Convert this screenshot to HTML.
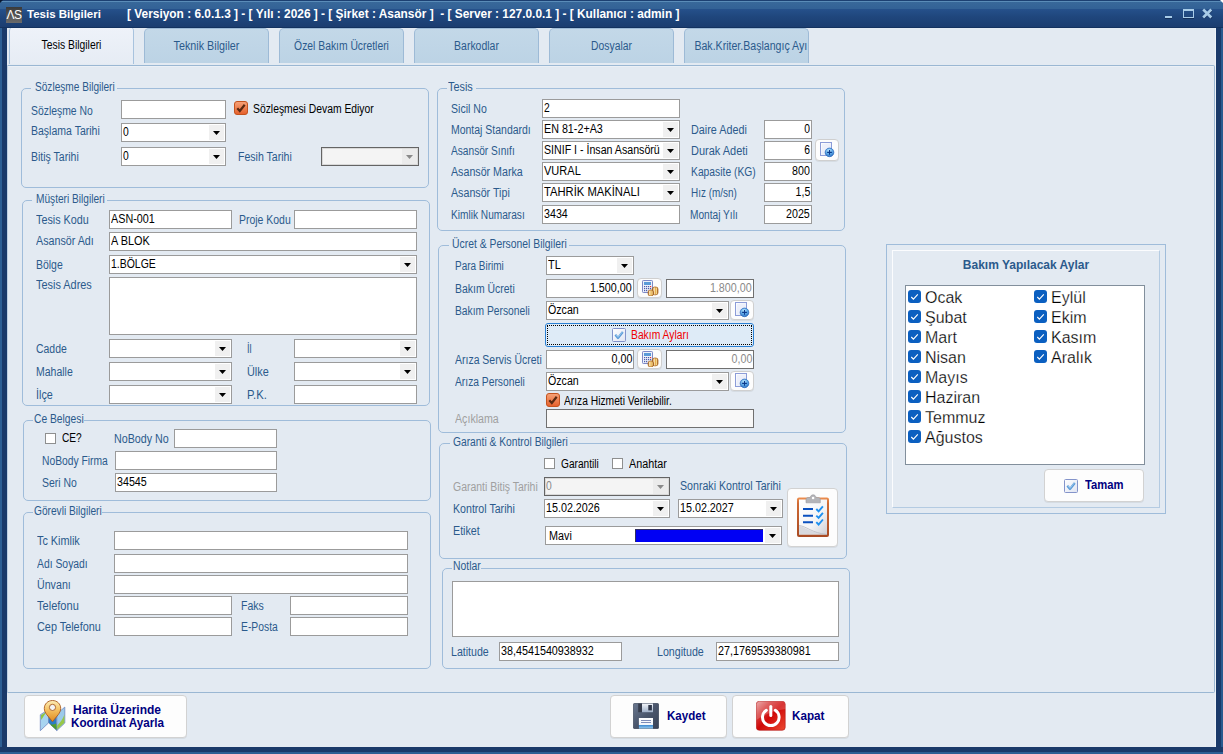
<!DOCTYPE html>
<html lang="tr"><head><meta charset="utf-8"><title>Tesis Bilgileri</title>
<style>
html,body{margin:0;padding:0}
body{width:1223px;height:754px;overflow:hidden;position:relative;background:#1c3f70;font-family:"Liberation Sans",sans-serif;font-size:12.5px;color:#000}
.abs{position:absolute}
#win{position:absolute;left:0;top:0;width:1223px;height:754px;overflow:hidden}
#tb{position:absolute;left:0;top:0;width:1223px;height:28px;background:linear-gradient(#1c4072 0,#1c4072 1px,#5a8cb8 1px,#5a8cb8 2px,#38689a 2px,#336296 8.500px,#25508a 9.500px,#1f467c 17px,#1b3d70 27px,#13325f 27px,#13325f 28px)}
#client{position:absolute;left:7px;top:28px;width:1209px;height:719px;background:#e3eaf2}
.t{position:absolute;white-space:pre;line-height:15px;height:15px;margin-left:-.5px;transform:scaleX(.82);transform-origin:0 50%}
.tr{transform-origin:100% 50%}
.bold{font-weight:bold}
.in{position:absolute;box-sizing:border-box;border:1px solid #9b9b9b;background:#fff;overflow:hidden}
.in .v{position:absolute;left:1px;top:0;line-height:17px;white-space:pre;transform:scaleX(.82);transform-origin:0 50%}
.in .v.r{left:auto;right:1px;transform-origin:100% 50%}
.in.dis{background:#f4f4f4;border-color:#646464;box-shadow:inset 0 0 0 1px #d9d9d9}
.in.dis .v{color:#8a8a8a}
.in.et .v{left:3px;top:1px}
.in.dis2{border-color:#707070}
.in.dis2 .v{color:#8a8a8a}
.in.dis3{border-color:#707070;background:#f8f8f8}
.dd{position:absolute;right:1px;top:1px;bottom:1px;width:15px;background:#f0f0f0}
.dd b{position:absolute;left:4px;top:6px;width:7px;height:4px;background:#000;clip-path:polygon(0 0,100% 0,50% 100%)}
.in.dis .dd{background:#ebebeb}
.in.dis .dd b{background:#8a8a8a}
.grp{position:absolute;box-sizing:border-box;border:1px solid #9fbcda;border-radius:5px}
.lgbg{position:absolute;background:#e3eaf2}
.ck{position:absolute;width:11px;height:11px;box-sizing:border-box;border:1px solid #8e8f8f;background:#fff}
.btn{position:absolute;box-sizing:border-box;border:1px solid #d2d2d2;border-radius:4px;background:#fdfdfd;box-shadow:0 1px 0 rgba(0,0,0,.06)}
.btn.sm{border-color:#cfcfcf;border-radius:4px}
.nv{color:#000080;font-size:12.5px;line-height:15px;white-space:pre;transform-origin:0 50%}
.tab{position:absolute;top:28px;height:35px;box-sizing:border-box;border:1px solid #9dbad6;border-bottom:none;border-radius:5px 5px 0 0;background:linear-gradient(#c3d8e8,#bcd3e5)}
.tab.act{background:linear-gradient(#eef2f9,#e6ecf4);top:26px;height:38px;border-color:#a8c3de;clip-path:inset(2px 0 0 0)}
</style></head><body><div id="win">
<svg width="0" height="0" style="position:absolute"><defs>
<linearGradient id="gPg" x1="0" y1="0" x2="1" y2="1"><stop offset="0" stop-color="#ffffff"/><stop offset="1" stop-color="#dfe6f6"/></linearGradient>
<radialGradient id="gPl" cx=".45" cy=".3" r=".75"><stop offset="0" stop-color="#c4ecff"/><stop offset=".55" stop-color="#5aa6e6"/><stop offset="1" stop-color="#2a66b8"/></radialGradient>
<linearGradient id="gCoin" x1="0" y1="0" x2="1" y2="0"><stop offset="0" stop-color="#b0641a"/><stop offset=".3" stop-color="#fff0c8"/><stop offset=".55" stop-color="#e8b050"/><stop offset=".75" stop-color="#f6d890"/><stop offset="1" stop-color="#9c5210"/></linearGradient>
<linearGradient id="gCk" x1="0" y1="0" x2="1" y2="1"><stop offset="0" stop-color="#ffffff"/><stop offset="1" stop-color="#dfe4f2"/></linearGradient>
<linearGradient id="gOr" x1="0" y1="0" x2="0" y2="1"><stop offset="0" stop-color="#f7a47a"/><stop offset="1" stop-color="#e55f2a"/></linearGradient>
<linearGradient id="gBoard" x1="0" y1="0" x2="0" y2="1"><stop offset="0" stop-color="#ee9050"/><stop offset=".15" stop-color="#cf6a34"/><stop offset="1" stop-color="#a84a22"/></linearGradient>
<linearGradient id="gPaper" x1="0" y1="0" x2="1" y2="1"><stop offset="0" stop-color="#ffffff"/><stop offset=".6" stop-color="#f4f4f6"/><stop offset="1" stop-color="#cfd0d6"/></linearGradient>
<linearGradient id="gPin" x1="0" y1="0" x2="0" y2="1"><stop offset="0" stop-color="#fdeeb8"/><stop offset=".45" stop-color="#f4c060"/><stop offset="1" stop-color="#e08a20"/></linearGradient>
<linearGradient id="gFl" x1="0" y1="0" x2="1" y2="1"><stop offset="0" stop-color="#6a7890"/><stop offset=".5" stop-color="#4a566c"/><stop offset="1" stop-color="#384256"/></linearGradient>
<linearGradient id="gMetal" x1="0" y1="0" x2="0" y2="1"><stop offset="0" stop-color="#f2f5fa"/><stop offset="1" stop-color="#9fb0c8"/></linearGradient>
<linearGradient id="gLbl" x1="0" y1="0" x2="0" y2="1"><stop offset="0" stop-color="#ffffff"/><stop offset=".66" stop-color="#f2f5fa"/><stop offset=".68" stop-color="#3f8bd0"/><stop offset="1" stop-color="#9ccdf0"/></linearGradient>
<linearGradient id="gRed" x1="0" y1="0" x2="1" y2="1"><stop offset="0" stop-color="#e89a9a"/><stop offset=".25" stop-color="#d84040"/><stop offset=".5" stop-color="#d00808"/><stop offset="1" stop-color="#ec4a30"/></linearGradient>
</defs></svg>
<div id="tb"></div>

<div class="abs" style="left:0;top:28px;width:7px;height:726px;background:linear-gradient(90deg,#2d5f94 0,#2d5f94 2px,#1a3a6a 2px,#1a3a6a 100%)"></div>
<div class="abs" style="left:1216px;top:28px;width:7px;height:726px;background:linear-gradient(90deg,#1a3a6a 0,#1a3a6a 5px,#2a5a8e 5px,#2a5a8e 100%)"></div>
<div class="abs" style="left:0;top:747px;width:1223px;height:7px;background:linear-gradient(#1a3a6a 0,#1a3a6a 5px,#2d5f94 5px,#2d5f94 100%)"></div>
<div id="client"></div>
<div class="abs" style="left:6px;top:7px;width:16px;height:16px;background:linear-gradient(#3a3a3a,#6b6b6b);overflow:hidden"><span style="position:absolute;left:0;top:1px;width:16px;text-align:center;color:#fff;font-size:12px;line-height:14px;letter-spacing:-.5px">ΛS</span></div>
<span class="abs bold" style="left:27px;top:7px;color:#fff;font-size:11.5px;line-height:14px;white-space:pre">Tesis Bilgileri</span>
<span class="abs bold" style="left:127px;top:7px;color:#fff;font-size:11.9px;line-height:14px;white-space:pre">[ Versiyon : 6.0.1.3 ] - [ Yılı : 2026 ] - [ Şirket : Asansör ]  - [ Server : 127.0.0.1 ] - [ Kullanıcı : admin ]</span>
<div class="abs" style="left:1165px;top:16px;width:7px;height:2px;background:#a8cce8;box-shadow:0 1px 0 #14305a"></div>
<div class="abs" style="left:1183px;top:9px;width:11px;height:9px;box-sizing:border-box;border:1px solid #a8cce8;border-top-width:2px;box-shadow:0 1px 0 #14305a"></div>
<svg class="abs" style="left:1202px;top:8px" width="11" height="11" viewBox="0 0 11 11"><path d="M1.200 1.500L9.300 9.500M9.300 1.500L1.200 9.500" stroke="#14305a" stroke-width="2.200" transform="translate(.5,.8)"/><path d="M1.200 1.500L9.300 9.500M9.300 1.500L1.200 9.500" stroke="#a8cce8" stroke-width="2.600"/></svg>
<div class="abs" style="left:1220px;top:0;width:3px;height:3px;background:linear-gradient(225deg,#fff 0,#fff 45%,transparent 55%)"></div>
<div class="abs" style="left:0;top:0;width:3px;height:3px;background:linear-gradient(135deg,#0a1830 0,#0a1830 45%,transparent 55%)"></div>
<div class="tab act" style="left:9px;width:125px"><span style="position:absolute;left:0;right:0;top:11px;text-align:center;line-height:15px;white-space:pre;transform:scaleX(0.827);color:#000">Tesis Bilgileri</span></div>
<div class="tab " style="left:144px;width:125px"><span style="position:absolute;left:0;right:0;top:10px;text-align:center;line-height:15px;white-space:pre;transform:scaleX(0.8607);color:#2b5a8c">Teknik Bilgiler</span></div>
<div class="tab " style="left:279px;width:125px"><span style="position:absolute;left:0;right:0;top:10px;text-align:center;line-height:15px;white-space:pre;transform:scaleX(0.8267);color:#2b5a8c">Özel Bakım Ücretleri</span></div>
<div class="tab " style="left:414px;width:125px"><span style="position:absolute;left:0;right:0;top:10px;text-align:center;line-height:15px;white-space:pre;transform:scaleX(0.8365);color:#2b5a8c">Barkodlar</span></div>
<div class="tab " style="left:549px;width:125px"><span style="position:absolute;left:0;right:0;top:10px;text-align:center;line-height:15px;white-space:pre;transform:scaleX(0.8261);color:#2b5a8c">Dosyalar</span></div>
<div class="tab " style="left:684px;width:125px"><span style="position:absolute;left:0;right:0;top:10px;text-align:center;line-height:15px;white-space:pre;transform:scaleX(0.8467);color:#2b5a8c">Bak.Kriter.Başlangıç Ayı</span></div>
<div class="abs" style="left:1215px;top:28px;width:1px;height:719px;background:#eef3f8"></div>
<div class="abs" style="left:7px;top:65px;width:1208px;height:628px;box-sizing:border-box;border:1px solid #9ab7d3;border-left-color:#bdd0e3;border-radius:0 2px 2px 0;background:#e3eaf2;box-shadow:inset 0 1px 0 #ebf0f6"></div>
<div class="grp" style="left:21px;top:88px;width:408px;height:100px"></div>
<div class="lgbg" style="left:31px;top:86px;width:86px;height:5px"></div>
<span class="t " style="left:35px;top:80px;transform:scaleX(0.8082);color:#2b5a8c;">Sözleşme Bilgileri</span>
<span class="t " style="left:31px;top:104px;transform:scaleX(0.8307);color:#2b5a8c;">Sözleşme No</span>
<div class="in " style="left:121px;top:100px;width:105px;height:19px"></div>
<svg class="abs" style="left:234px;top:101px" width="14" height="14" viewBox="0 0 14 14"><rect x=".5" y=".5" width="13" height="13" rx="2.500" fill="url(#gOr)" stroke="#c4531f"/><path d="M3.300 7.300 L5.800 10 L10.700 3.800" fill="none" stroke="#5a2a12" stroke-width="2.200"/></svg>
<span class="t " style="left:253px;top:102px;transform:scaleX(0.8277);color:#000;">Sözleşmesi Devam Ediyor</span>
<span class="t " style="left:31px;top:124px;transform:scaleX(0.8411);color:#2b5a8c;">Başlama Tarihi</span>
<div class="in cb " style="left:121px;top:123px;width:105px;height:19px"><span class="v" style="transform:scaleX(0.8262)">0</span><i class="dd"><b></b></i></div>
<span class="t " style="left:31px;top:150px;transform:scaleX(0.8418);color:#2b5a8c;">Bitiş Tarihi</span>
<div class="in cb " style="left:121px;top:147px;width:105px;height:19px"><span class="v" style="transform:scaleX(0.8262)">0</span><i class="dd"><b></b></i></div>
<span class="t " style="left:238px;top:150px;transform:scaleX(0.8442);color:#2b5a8c;">Fesih Tarihi</span>
<div class="in cb dis" style="left:321px;top:147px;width:98px;height:19px"><i class="dd"><b></b></i></div>
<div class="grp" style="left:22px;top:200px;width:408px;height:206px"></div>
<div class="lgbg" style="left:32px;top:198px;width:75px;height:5px"></div>
<span class="t " style="left:36px;top:192px;transform:scaleX(0.811);color:#2b5a8c;">Müşteri Bilgileri</span>
<span class="t " style="left:36px;top:213px;transform:scaleX(0.8631);color:#2b5a8c;">Tesis Kodu</span>
<div class="in " style="left:109px;top:210px;width:123px;height:19px"><span class="v " style="transform:scaleX(0.8631)">ASN-001</span></div>
<span class="t " style="left:239px;top:213px;transform:scaleX(0.8368);color:#2b5a8c;">Proje Kodu</span>
<div class="in " style="left:294px;top:210px;width:123px;height:19px"></div>
<span class="t " style="left:36px;top:234px;transform:scaleX(0.8571);color:#2b5a8c;">Asansör Adı</span>
<div class="in " style="left:109px;top:232px;width:308px;height:19px"><span class="v " style="transform:scaleX(0.8721)">A BLOK</span></div>
<span class="t " style="left:36px;top:258px;transform:scaleX(0.8368);color:#2b5a8c;">Bölge</span>
<div class="in cb " style="left:109px;top:255px;width:308px;height:19px"><span class="v" style="transform:scaleX(0.8365)">1.BÖLGE</span><i class="dd"><b></b></i></div>
<span class="t " style="left:36px;top:278px;transform:scaleX(0.8728);color:#2b5a8c;">Tesis Adres</span>
<div class="in " style="left:109px;top:277px;width:308px;height:58px"></div>
<span class="t " style="left:36px;top:342px;transform:scaleX(0.8348);color:#2b5a8c;">Cadde</span>
<div class="in cb " style="left:109px;top:339px;width:123px;height:19px"><i class="dd"><b></b></i></div>
<span class="t " style="left:247px;top:342px;transform:scaleX(0.7477);color:#2b5a8c;">İl</span>
<div class="in cb " style="left:294px;top:339px;width:123px;height:19px"><i class="dd"><b></b></i></div>
<span class="t " style="left:36px;top:365px;transform:scaleX(0.8397);color:#2b5a8c;">Mahalle</span>
<div class="in cb " style="left:109px;top:362px;width:123px;height:19px"><i class="dd"><b></b></i></div>
<span class="t " style="left:247px;top:365px;transform:scaleX(0.8711);color:#2b5a8c;">Ülke</span>
<div class="in cb " style="left:294px;top:362px;width:123px;height:19px"><i class="dd"><b></b></i></div>
<span class="t " style="left:36px;top:388px;transform:scaleX(0.8624);color:#2b5a8c;">İlçe</span>
<div class="in cb " style="left:109px;top:385px;width:123px;height:19px"><i class="dd"><b></b></i></div>
<span class="t " style="left:247px;top:388px;transform:scaleX(0.9001);color:#2b5a8c;">P.K.</span>
<div class="in " style="left:294px;top:385px;width:123px;height:19px"></div>
<div class="grp" style="left:23px;top:420px;width:408px;height:81px"></div>
<div class="lgbg" style="left:33px;top:418px;width:51px;height:5px"></div>
<span class="t " style="left:34px;top:412px;transform:scaleX(0.8228);color:#2b5a8c;">Ce Belgesi</span>
<div class="ck" style="left:45px;top:433px"></div>
<span class="t " style="left:62px;top:431px;transform:scaleX(0.8114);color:#000;">CE?</span>
<span class="t " style="left:114px;top:432px;transform:scaleX(0.8568);color:#2b5a8c;">NoBody No</span>
<div class="in " style="left:174px;top:429px;width:103px;height:19px"></div>
<span class="t " style="left:42px;top:454px;transform:scaleX(0.823);color:#2b5a8c;">NoBody Firma</span>
<div class="in " style="left:115px;top:451px;width:162px;height:19px"></div>
<span class="t " style="left:42px;top:476px;transform:scaleX(0.8337);color:#2b5a8c;">Seri No</span>
<div class="in " style="left:115px;top:473px;width:162px;height:19px"><span class="v " style="transform:scaleX(0.8565)">34545</span></div>
<div class="grp" style="left:23px;top:512px;width:408px;height:157px"></div>
<div class="lgbg" style="left:33px;top:510px;width:69px;height:5px"></div>
<span class="t " style="left:34px;top:504px;transform:scaleX(0.8126);color:#2b5a8c;">Görevli Bilgileri</span>
<span class="t " style="left:37px;top:534px;transform:scaleX(0.8677);color:#2b5a8c;">Tc Kimlik</span>
<div class="in " style="left:114px;top:531px;width:294px;height:19px"></div>
<span class="t " style="left:37px;top:557px;transform:scaleX(0.8299);color:#2b5a8c;">Adı Soyadı</span>
<div class="in " style="left:114px;top:554px;width:294px;height:19px"></div>
<span class="t " style="left:37px;top:578px;transform:scaleX(0.8526);color:#2b5a8c;">Ünvanı</span>
<div class="in " style="left:114px;top:575px;width:294px;height:19px"></div>
<span class="t " style="left:37px;top:599px;transform:scaleX(0.8844);color:#2b5a8c;">Telefonu</span>
<div class="in " style="left:114px;top:596px;width:118px;height:19px"></div>
<span class="t " style="left:241px;top:599px;transform:scaleX(0.8401);color:#2b5a8c;">Faks</span>
<div class="in " style="left:290px;top:596px;width:118px;height:19px"></div>
<span class="t " style="left:37px;top:620px;transform:scaleX(0.8685);color:#2b5a8c;">Cep Telefonu</span>
<div class="in " style="left:114px;top:617px;width:118px;height:19px"></div>
<span class="t " style="left:241px;top:620px;transform:scaleX(0.8264);color:#2b5a8c;">E-Posta</span>
<div class="in " style="left:290px;top:617px;width:118px;height:19px"></div>
<div class="grp" style="left:437px;top:88px;width:408px;height:143px"></div>
<div class="lgbg" style="left:447px;top:86px;width:29px;height:5px"></div>
<span class="t " style="left:448px;top:80px;transform:scaleX(0.8702);color:#2b5a8c;">Tesis</span>
<span class="t " style="left:451px;top:102px;transform:scaleX(0.844);color:#2b5a8c;">Sicil No</span>
<div class="in " style="left:542px;top:99px;width:138px;height:19px"><span class="v " style="transform:scaleX(0.8262)">2</span></div>
<span class="t " style="left:451px;top:123px;transform:scaleX(0.8378);color:#2b5a8c;">Montaj Standardı</span>
<div class="in cb " style="left:542px;top:120px;width:138px;height:19px"><span class="v" style="transform:scaleX(0.8587)">EN 81-2+A3</span><i class="dd"><b></b></i></div>
<span class="t " style="left:451px;top:144px;transform:scaleX(0.8118);color:#2b5a8c;">Asansör Sınıfı</span>
<div class="in cb " style="left:542px;top:141px;width:138px;height:19px"><span class="v" style="transform:scaleX(0.8502)">SINIF I - İnsan Asansörü</span><i class="dd"><b></b></i></div>
<span class="t " style="left:451px;top:165px;transform:scaleX(0.8538);color:#2b5a8c;">Asansör Marka</span>
<div class="in cb " style="left:542px;top:162px;width:138px;height:19px"><span class="v" style="transform:scaleX(0.8828)">VURAL</span><i class="dd"><b></b></i></div>
<span class="t " style="left:451px;top:186px;transform:scaleX(0.8544);color:#2b5a8c;">Asansör Tipi</span>
<div class="in cb " style="left:542px;top:183px;width:138px;height:19px"><span class="v" style="transform:scaleX(0.8976)">TAHRİK MAKİNALI</span><i class="dd"><b></b></i></div>
<span class="t " style="left:451px;top:208px;transform:scaleX(0.8103);color:#2b5a8c;">Kimlik Numarası</span>
<div class="in " style="left:542px;top:205px;width:138px;height:19px"><span class="v " style="transform:scaleX(0.8548)">3434</span></div>
<span class="t " style="left:691px;top:123px;transform:scaleX(0.8631);color:#2b5a8c;">Daire Adedi</span>
<div class="in " style="left:764px;top:120px;width:48px;height:19px"><span class="v r" style="transform:scaleX(0.8262)">0</span></div>
<span class="t " style="left:691px;top:144px;transform:scaleX(0.8789);color:#2b5a8c;">Durak Adeti</span>
<div class="in " style="left:764px;top:141px;width:48px;height:19px"><span class="v r" style="transform:scaleX(0.8262)">6</span></div>
<div class="btn sm" style="left:815px;top:139px;width:24px;height:22px"><svg width="22" height="18" viewBox="0 0 22 18" style="position:absolute;left:-1px;top:0px"><rect x="5.500" y="2.500" width="11" height="13" fill="url(#gPg)" stroke="#8c9cd8"/><rect x="7" y="4" width="8" height="10" fill="#e9edfa" opacity=".7"/><circle cx="14.500" cy="12.400" r="4.300" fill="url(#gPl)" stroke="#2f6fc0" stroke-width=".8"/><path d="M14.500 10v4.800M12.100 12.400h4.800" stroke="#0a3a8c" stroke-width="1.100"/></svg></div>
<span class="t " style="left:691px;top:165px;transform:scaleX(0.8247);color:#2b5a8c;">Kapasite (KG)</span>
<div class="in " style="left:764px;top:162px;width:48px;height:19px"><span class="v r" style="transform:scaleX(0.8519)">800</span></div>
<span class="t " style="left:691px;top:186px;transform:scaleX(0.7932);color:#2b5a8c;">Hız (m/sn)</span>
<div class="in " style="left:764px;top:183px;width:48px;height:19px"><span class="v r" style="transform:scaleX(0.8497)">1,5</span></div>
<span class="t " style="left:690px;top:208px;transform:scaleX(0.8114);color:#2b5a8c;">Montaj Yılı</span>
<div class="in " style="left:764px;top:205px;width:48px;height:19px"><span class="v r" style="transform:scaleX(0.8548)">2025</span></div>
<div class="grp" style="left:438px;top:245px;width:408px;height:188px"></div>
<div class="lgbg" style="left:449px;top:243px;width:120px;height:5px"></div>
<span class="t " style="left:452px;top:237px;transform:scaleX(0.83);color:#2b5a8c;">Ücret &amp; Personel Bilgileri</span>
<span class="t " style="left:455px;top:259px;transform:scaleX(0.7971);color:#2b5a8c;">Para Birimi</span>
<div class="in cb " style="left:546px;top:256px;width:88px;height:19px"><span class="v" style="transform:scaleX(0.8767)">TL</span><i class="dd"><b></b></i></div>
<span class="t " style="left:455px;top:282px;transform:scaleX(0.8352);color:#2b5a8c;">Bakım Ücreti</span>
<div class="in " style="left:546px;top:279px;width:88px;height:19px"><span class="v r" style="transform:scaleX(0.8585)">1.500,00</span></div>
<div class="btn sm" style="left:637px;top:278px;width:25px;height:20px"><svg width="23" height="18" viewBox="0 0 23 18" style="position:absolute;left:-1px;top:-1px"><rect x="5.500" y="2.500" width="10" height="12" rx=".8" fill="#eef2fb" stroke="#7c88c6"/><rect x="7" y="4" width="7" height="3" fill="#5b9bd8"/><g fill="#4c5cab"><rect x="7" y="8" width="1.200" height="1.200"/><rect x="9" y="8" width="1.200" height="1.200"/><rect x="11" y="8" width="1.200" height="1.200"/><rect x="7" y="10" width="1.200" height="1.200"/><rect x="9" y="10" width="1.200" height="1.200"/><rect x="11" y="10" width="1.200" height="1.200"/><rect x="13" y="10" width="1.200" height="1.200"/><rect x="7" y="12" width="1.200" height="1.200"/><rect x="9" y="12" width="1.200" height="1.200"/></g><rect x="13" y="8" width="1.200" height="1.200" fill="#e03030"/><rect x="15.400" y="9" width="5.600" height="7.800" rx="2.200" fill="url(#gCoin)" stroke="#a05a14" stroke-width=".7"/><rect x="11.100" y="12" width="5.400" height="5.900" rx="2.200" fill="url(#gCoin)" stroke="#a05a14" stroke-width=".7"/></svg></div>
<div class="in dis2" style="left:666px;top:279px;width:88px;height:19px"><span class="v r" style="transform:scaleX(0.8585)">1.800,00</span></div>
<span class="t " style="left:455px;top:304px;transform:scaleX(0.8212);color:#2b5a8c;">Bakım Personeli</span>
<div class="in cb " style="left:546px;top:301px;width:183px;height:19px"><span class="v" style="transform:scaleX(0.8516)">Özcan</span><i class="dd"><b></b></i></div>
<div class="btn sm" style="left:730px;top:300px;width:24px;height:20px"><svg width="22" height="18" viewBox="0 0 22 18" style="position:absolute;left:-1px;top:-1px"><rect x="5.500" y="2.500" width="11" height="13" fill="url(#gPg)" stroke="#8c9cd8"/><rect x="7" y="4" width="8" height="10" fill="#e9edfa" opacity=".7"/><circle cx="14.500" cy="12.400" r="4.300" fill="url(#gPl)" stroke="#2f6fc0" stroke-width=".8"/><path d="M14.500 10v4.800M12.100 12.400h4.800" stroke="#0a3a8c" stroke-width="1.100"/></svg></div>
<div class="abs" style="left:545px;top:323px;width:209px;height:24px;box-sizing:border-box;border:1px solid #2a80d4;border-radius:3px;background:#deebf7"><div style="position:absolute;left:1px;top:1px;right:1px;bottom:1px;border:1px dotted #000"></div><svg width="14" height="14" viewBox="0 0 14 14" style="position:absolute;left:66px;top:4px"><rect x=".5" y=".5" width="13" height="13" rx="1" fill="url(#gCk)" stroke="#8494ca"/><path d="M3.300 6.800 L6 10 L10.800 4" fill="none" stroke="#5b9bd8" stroke-width="2.200" stroke-linejoin="round"/><path d="M3.600 6.500 L6 9.300 L10.500 3.700" fill="none" stroke="#a8d0f0" stroke-width=".8"/></svg><span class="t" style="left:85.3px;top:4px;color:#f00000;transform:scaleX(0.8257)">Bakım Ayları</span></div>
<span class="t " style="left:455px;top:353px;transform:scaleX(0.8383);color:#2b5a8c;">Arıza Servis Ücreti</span>
<div class="in " style="left:546px;top:350px;width:88px;height:19px"><span class="v r" style="transform:scaleX(0.8537)">0,00</span></div>
<div class="btn sm" style="left:637px;top:349px;width:25px;height:20px"><svg width="23" height="18" viewBox="0 0 23 18" style="position:absolute;left:-1px;top:-1px"><rect x="5.500" y="2.500" width="10" height="12" rx=".8" fill="#eef2fb" stroke="#7c88c6"/><rect x="7" y="4" width="7" height="3" fill="#5b9bd8"/><g fill="#4c5cab"><rect x="7" y="8" width="1.200" height="1.200"/><rect x="9" y="8" width="1.200" height="1.200"/><rect x="11" y="8" width="1.200" height="1.200"/><rect x="7" y="10" width="1.200" height="1.200"/><rect x="9" y="10" width="1.200" height="1.200"/><rect x="11" y="10" width="1.200" height="1.200"/><rect x="13" y="10" width="1.200" height="1.200"/><rect x="7" y="12" width="1.200" height="1.200"/><rect x="9" y="12" width="1.200" height="1.200"/></g><rect x="13" y="8" width="1.200" height="1.200" fill="#e03030"/><rect x="15.400" y="9" width="5.600" height="7.800" rx="2.200" fill="url(#gCoin)" stroke="#a05a14" stroke-width=".7"/><rect x="11.100" y="12" width="5.400" height="5.900" rx="2.200" fill="url(#gCoin)" stroke="#a05a14" stroke-width=".7"/></svg></div>
<div class="in dis2" style="left:666px;top:350px;width:88px;height:19px"><span class="v r" style="transform:scaleX(0.8537)">0,00</span></div>
<span class="t " style="left:455px;top:375px;transform:scaleX(0.8228);color:#2b5a8c;">Arıza Personeli</span>
<div class="in cb " style="left:546px;top:372px;width:183px;height:19px"><span class="v" style="transform:scaleX(0.8516)">Özcan</span><i class="dd"><b></b></i></div>
<div class="btn sm" style="left:730px;top:371px;width:24px;height:20px"><svg width="22" height="18" viewBox="0 0 22 18" style="position:absolute;left:-1px;top:-1px"><rect x="5.500" y="2.500" width="11" height="13" fill="url(#gPg)" stroke="#8c9cd8"/><rect x="7" y="4" width="8" height="10" fill="#e9edfa" opacity=".7"/><circle cx="14.500" cy="12.400" r="4.300" fill="url(#gPl)" stroke="#2f6fc0" stroke-width=".8"/><path d="M14.500 10v4.800M12.100 12.400h4.800" stroke="#0a3a8c" stroke-width="1.100"/></svg></div>
<svg class="abs" style="left:546px;top:393px" width="14" height="14" viewBox="0 0 14 14"><rect x=".5" y=".5" width="13" height="13" rx="2.500" fill="url(#gOr)" stroke="#c4531f"/><path d="M3.300 7.300 L5.800 10 L10.700 3.800" fill="none" stroke="#5a2a12" stroke-width="2.200"/></svg>
<span class="t " style="left:564px;top:394px;transform:scaleX(0.8206);color:#000;">Arıza Hizmeti Verilebilir.</span>
<span class="t " style="left:455px;top:412px;transform:scaleX(0.8514);color:#a0a0a0;">Açıklama</span>
<div class="in dis3" style="left:546px;top:409px;width:208px;height:19px"></div>
<div class="grp" style="left:439px;top:443px;width:408px;height:116px"></div>
<div class="lgbg" style="left:450px;top:441px;width:120px;height:5px"></div>
<span class="t " style="left:453px;top:435px;transform:scaleX(0.8217);color:#2b5a8c;">Garanti &amp; Kontrol Bilgileri</span>
<div class="ck" style="left:544px;top:458px"></div>
<span class="t " style="left:561px;top:457px;transform:scaleX(0.8106);color:#000;">Garantili</span>
<div class="ck" style="left:612px;top:458px"></div>
<span class="t " style="left:629px;top:457px;transform:scaleX(0.8629);color:#000;">Anahtar</span>
<span class="t " style="left:453px;top:480px;transform:scaleX(0.8375);color:#a0a0a0;">Garanti Bitiş Tarihi</span>
<div class="in cb dis" style="left:544px;top:477px;width:126px;height:19px"><span class="v" style="transform:scaleX(0.8262)">0</span><i class="dd"><b></b></i></div>
<span class="t " style="left:680px;top:479px;transform:scaleX(0.8498);color:#2b5a8c;">Sonraki Kontrol Tarihi</span>
<span class="t " style="left:453px;top:502px;transform:scaleX(0.8493);color:#2b5a8c;">Kontrol Tarihi</span>
<div class="in cb " style="left:544px;top:499px;width:126px;height:19px"><span class="v" style="transform:scaleX(0.8595)">15.02.2026</span><i class="dd"><b></b></i></div>
<div class="in cb " style="left:678px;top:499px;width:105px;height:19px"><span class="v" style="transform:scaleX(0.8595)">15.02.2027</span><i class="dd"><b></b></i></div>
<span class="t " style="left:453px;top:524px;transform:scaleX(0.8563);color:#2b5a8c;">Etiket</span>
<div class="in cb et" style="left:545px;top:526px;width:237px;height:19px"><span class="v" style="transform:scaleX(0.863)">Mavi</span><i class="dd"><b></b></i></div>
<div class="abs" style="left:635px;top:529px;width:128px;height:13px;box-sizing:border-box;background:#0000f4;border-left:1px solid #303060;border-top:1px solid #303060"></div>
<div class="btn " style="left:787px;top:488px;width:51px;height:59px"><svg width="51" height="59" viewBox="0 0 51 59" style="position:absolute;left:-1px;top:-1px"><rect x="10" y="9.500" width="32" height="39.500" rx="2" fill="url(#gBoard)"/><rect x="12" y="11.500" width="28" height="35" fill="url(#gPaper)"/><path d="M12 38c6 1 12 7 28 8.500H12z" fill="#d8d9de"/><path d="M12 37.500c7 .5 13 7.500 28 9" fill="none" stroke="#b9bac2" stroke-width=".8"/><path d="M19 14.800v-3.300c0-1.200.8-2 2-2h2.200c.2-1.600 1.400-2.700 2.900-2.700s2.700 1.100 2.900 2.700H31.300c1.200 0 2 .8 2 2v3.300z" fill="#b4b4b8" stroke="#98989e" stroke-width=".6"/><circle cx="26.100" cy="10" r="1.300" fill="#fff"/><path d="M16 21.100h10M16 27.700h10M16 34.300h10" stroke="#0a50c0" stroke-width="2"/><path d="M29.300 21l2.300 2.300 4.300-5M29.300 27.600l2.300 2.300 4.300-5M29.300 34.200l2.300 2.300 4.300-5" fill="none" stroke="#1e90f0" stroke-width="1.900"/></svg></div>
<div class="grp" style="left:442px;top:568px;width:408px;height:101px"></div>
<div class="lgbg" style="left:452px;top:566px;width:29px;height:5px"></div>
<span class="t " style="left:453px;top:559px;transform:scaleX(0.8322);color:#2b5a8c;">Notlar</span>
<div class="in " style="left:452px;top:581px;width:387px;height:56px"></div>
<span class="t " style="left:451px;top:645px;transform:scaleX(0.849);color:#2b5a8c;">Latitude</span>
<div class="in " style="left:499px;top:642px;width:123px;height:19px"><span class="v " style="transform:scaleX(0.861)">38,4541540938932</span></div>
<span class="t " style="left:657px;top:645px;transform:scaleX(0.8516);color:#2b5a8c;">Longitude</span>
<div class="in " style="left:716px;top:642px;width:123px;height:19px"><span class="v " style="transform:scaleX(0.861)">27,1769539380981</span></div>
<div class="abs" style="left:886px;top:244px;width:280px;height:270px;box-sizing:border-box;border:1px solid #9fbcda;background:#e3eaf2"></div>
<div class="abs" style="left:892px;top:250px;width:268px;height:258px;box-sizing:border-box;border:1px solid;border-color:#fbfcfe #b4cbe2 #b4cbe2 #fbfcfe;background:#e3eaf2"></div>
<span class="abs bold" style="left:892px;width:268px;top:258px;text-align:center;color:#2b5a8c;font-size:12px;line-height:15px">Bakım Yapılacak Aylar</span>
<div class="abs" style="left:905px;top:285px;width:240px;height:180px;box-sizing:border-box;border:1px solid #828f9c;background:#fff"></div>
<svg class="abs" style="left:908px;top:290px" width="13" height="13" viewBox="0 0 13 13"><rect x="0" y="0" width="13" height="13" rx="3" fill="#0b5fc0"/><path d="M3.300 7 L5.400 9.200 L9.800 4.400" fill="none" stroke="#fff" stroke-width="1.100"/></svg>
<span class="abs" style="left:925px;top:289px;font-size:16px;line-height:18px;-webkit-text-stroke:.25px #fff">Ocak</span>
<svg class="abs" style="left:908px;top:310px" width="13" height="13" viewBox="0 0 13 13"><rect x="0" y="0" width="13" height="13" rx="3" fill="#0b5fc0"/><path d="M3.300 7 L5.400 9.200 L9.800 4.400" fill="none" stroke="#fff" stroke-width="1.100"/></svg>
<span class="abs" style="left:925px;top:309px;font-size:16px;line-height:18px;-webkit-text-stroke:.25px #fff">Şubat</span>
<svg class="abs" style="left:908px;top:330px" width="13" height="13" viewBox="0 0 13 13"><rect x="0" y="0" width="13" height="13" rx="3" fill="#0b5fc0"/><path d="M3.300 7 L5.400 9.200 L9.800 4.400" fill="none" stroke="#fff" stroke-width="1.100"/></svg>
<span class="abs" style="left:925px;top:329px;font-size:16px;line-height:18px;-webkit-text-stroke:.25px #fff">Mart</span>
<svg class="abs" style="left:908px;top:350px" width="13" height="13" viewBox="0 0 13 13"><rect x="0" y="0" width="13" height="13" rx="3" fill="#0b5fc0"/><path d="M3.300 7 L5.400 9.200 L9.800 4.400" fill="none" stroke="#fff" stroke-width="1.100"/></svg>
<span class="abs" style="left:925px;top:349px;font-size:16px;line-height:18px;-webkit-text-stroke:.25px #fff">Nisan</span>
<svg class="abs" style="left:908px;top:370px" width="13" height="13" viewBox="0 0 13 13"><rect x="0" y="0" width="13" height="13" rx="3" fill="#0b5fc0"/><path d="M3.300 7 L5.400 9.200 L9.800 4.400" fill="none" stroke="#fff" stroke-width="1.100"/></svg>
<span class="abs" style="left:925px;top:369px;font-size:16px;line-height:18px;-webkit-text-stroke:.25px #fff">Mayıs</span>
<svg class="abs" style="left:908px;top:390px" width="13" height="13" viewBox="0 0 13 13"><rect x="0" y="0" width="13" height="13" rx="3" fill="#0b5fc0"/><path d="M3.300 7 L5.400 9.200 L9.800 4.400" fill="none" stroke="#fff" stroke-width="1.100"/></svg>
<span class="abs" style="left:925px;top:389px;font-size:16px;line-height:18px;-webkit-text-stroke:.25px #fff">Haziran</span>
<svg class="abs" style="left:908px;top:410px" width="13" height="13" viewBox="0 0 13 13"><rect x="0" y="0" width="13" height="13" rx="3" fill="#0b5fc0"/><path d="M3.300 7 L5.400 9.200 L9.800 4.400" fill="none" stroke="#fff" stroke-width="1.100"/></svg>
<span class="abs" style="left:925px;top:409px;font-size:16px;line-height:18px;-webkit-text-stroke:.25px #fff">Temmuz</span>
<svg class="abs" style="left:908px;top:430px" width="13" height="13" viewBox="0 0 13 13"><rect x="0" y="0" width="13" height="13" rx="3" fill="#0b5fc0"/><path d="M3.300 7 L5.400 9.200 L9.800 4.400" fill="none" stroke="#fff" stroke-width="1.100"/></svg>
<span class="abs" style="left:925px;top:429px;font-size:16px;line-height:18px;-webkit-text-stroke:.25px #fff">Ağustos</span>
<svg class="abs" style="left:1034px;top:290px" width="13" height="13" viewBox="0 0 13 13"><rect x="0" y="0" width="13" height="13" rx="3" fill="#0b5fc0"/><path d="M3.300 7 L5.400 9.200 L9.800 4.400" fill="none" stroke="#fff" stroke-width="1.100"/></svg>
<span class="abs" style="left:1051px;top:289px;font-size:16px;line-height:18px;-webkit-text-stroke:.25px #fff">Eylül</span>
<svg class="abs" style="left:1034px;top:310px" width="13" height="13" viewBox="0 0 13 13"><rect x="0" y="0" width="13" height="13" rx="3" fill="#0b5fc0"/><path d="M3.300 7 L5.400 9.200 L9.800 4.400" fill="none" stroke="#fff" stroke-width="1.100"/></svg>
<span class="abs" style="left:1051px;top:309px;font-size:16px;line-height:18px;-webkit-text-stroke:.25px #fff">Ekim</span>
<svg class="abs" style="left:1034px;top:330px" width="13" height="13" viewBox="0 0 13 13"><rect x="0" y="0" width="13" height="13" rx="3" fill="#0b5fc0"/><path d="M3.300 7 L5.400 9.200 L9.800 4.400" fill="none" stroke="#fff" stroke-width="1.100"/></svg>
<span class="abs" style="left:1051px;top:329px;font-size:16px;line-height:18px;-webkit-text-stroke:.25px #fff">Kasım</span>
<svg class="abs" style="left:1034px;top:350px" width="13" height="13" viewBox="0 0 13 13"><rect x="0" y="0" width="13" height="13" rx="3" fill="#0b5fc0"/><path d="M3.300 7 L5.400 9.200 L9.800 4.400" fill="none" stroke="#fff" stroke-width="1.100"/></svg>
<span class="abs" style="left:1051px;top:349px;font-size:16px;line-height:18px;-webkit-text-stroke:.25px #fff">Aralık</span>
<div class="btn " style="left:1044px;top:469px;width:100px;height:33px"><svg width="14" height="14" viewBox="0 0 14 14" style="position:absolute;left:19px;top:9px"><rect x=".5" y=".5" width="13" height="13" rx="1" fill="url(#gCk)" stroke="#8494ca"/><path d="M3.300 6.800 L6 10 L10.800 4" fill="none" stroke="#5b9bd8" stroke-width="2.200" stroke-linejoin="round"/><path d="M3.600 6.500 L6 9.300 L10.500 3.700" fill="none" stroke="#a8d0f0" stroke-width=".8"/></svg><span class="abs bold nv" style="left:40px;top:8px;transform:scaleX(0.8987)">Tamam</span></div>
<div class="btn " style="left:24px;top:695px;width:163px;height:43px"><svg width="30" height="36" viewBox="0 0 30 36" style="position:absolute;left:13px;top:0px"><g stroke="#7088c0" stroke-width=".8" stroke-linejoin="round"><path d="M2.300 18.800L10.600 13.500V26.800L2.300 34.700z" fill="#a8d4f0"/><path d="M10.600 13.500L18.800 18V34.500L10.600 26.800z" fill="#2c7cc4"/><path d="M18.800 18L26.800 11.100V27L18.800 34.500z" fill="#9ccaea"/></g><path d="M3 19.200L8.500 15.700L3.200 24z" fill="#8fc63e"/><path d="M13 29.200L18.400 27.500V33.800z" fill="#58a030"/><path d="M11 27L18.400 30.500V33.800z" fill="#4e9a2c" opacity=".8"/><path d="M19.200 29.500C22 27 25 23 26.400 18.500V26.800L19.200 33.600z" fill="#98c848"/><path d="M14.500 4.500c-4.600 0-8.200 3.500-8.200 7.900 0 2.400 1 4.300 2.500 6.300L14.500 25.700l5.700-7c1.500-2 2.500-3.900 2.500-6.300 0-4.400-3.600-7.900-8.200-7.900z" fill="url(#gPin)" stroke="#a85a20" stroke-width=".9"/><circle cx="14.500" cy="11.400" r="3.100" fill="#f4f4f4" stroke="#a85a20" stroke-width=".9"/></svg><span class="abs bold nv" style="left:47.5px;top:7px;transform:scaleX(0.9597)">Harita Üzerinde</span><span class="abs bold nv" style="left:45.5px;top:20px;transform:scaleX(0.932)">Koordinat Ayarla</span></div>
<div class="btn " style="left:610px;top:695px;width:117px;height:43px"><svg width="26" height="26" viewBox="0 0 26 26" style="position:absolute;left:22px;top:7px"><rect x=".3" y=".3" width="25.400" height="25.400" rx="1.500" fill="url(#gFl)" stroke="#2e384a" stroke-width=".6"/><rect x="5.200" y=".6" width="3.800" height="8.600" fill="#363c4c"/><rect x="9" y=".6" width="11" height="8.600" fill="url(#gMetal)"/><rect x="15.300" y="2" width="3.600" height="5.400" fill="#2e3648"/><rect x="5.900" y="15" width="14.100" height="10.600" fill="url(#gLbl)"/><path d="M8 17.500h10M8 19.500h10" stroke="#7080b0" stroke-width=".9"/></svg><span class="abs bold nv" style="left:56px;top:13px;transform:scaleX(0.9237)">Kaydet</span></div>
<div class="btn " style="left:732px;top:695px;width:117px;height:43px"><svg width="30" height="30" viewBox="0 0 30 30" style="position:absolute;left:23px;top:5px"><rect x=".3" y=".3" width="28.900" height="29" rx="3" fill="url(#gRed)" stroke="#b01010" stroke-width=".6"/><path d="M.5 3.300a3 3 0 0 1 3-3h23a3 3 0 0 1 3 3V8C20 9 9 13 .5 19z" fill="#fff" opacity=".18"/><path d="M10.300 9.300a8.300 8.300 0 1 0 9 0" fill="none" stroke="#fff" stroke-width="3" stroke-linecap="round"/><path d="M14.800 5.600v9" stroke="#fff" stroke-width="3" stroke-linecap="round"/></svg><span class="abs bold nv" style="left:59px;top:13px;transform:scaleX(0.9358)">Kapat</span></div>
</div></body></html>
